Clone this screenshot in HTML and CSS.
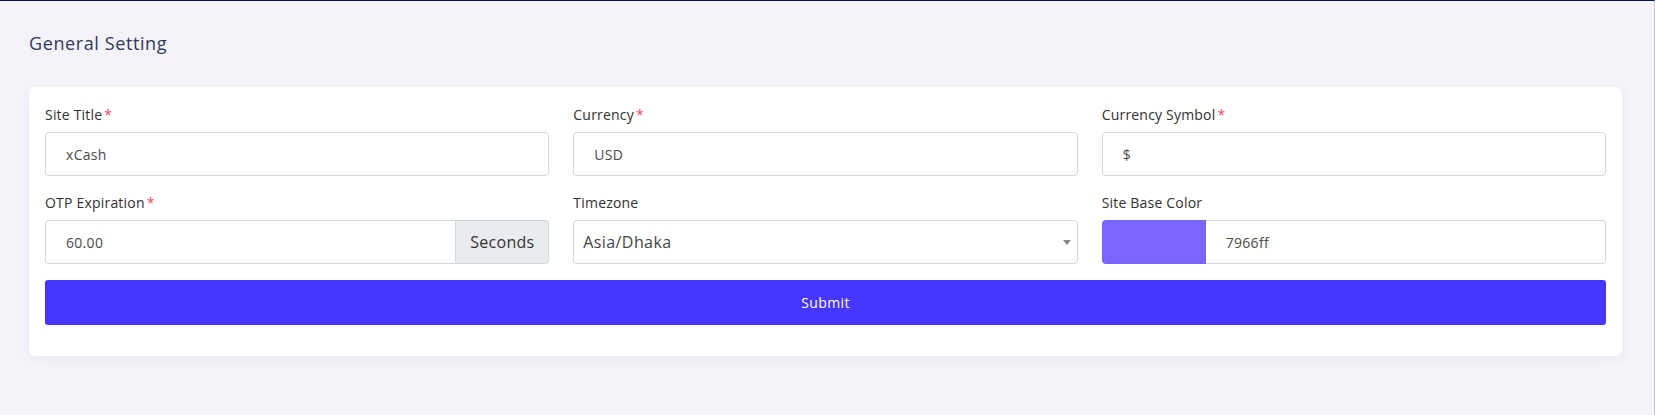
FILE: index.html
```html
<!DOCTYPE html>
<html lang="en">
<head>
<meta charset="utf-8">
<title>General Setting</title>
<link rel="stylesheet" href="styles.css">
</head>
<body>
<div class="page">
  <h4 class="page-title">General Setting</h4>
  <div class="card">
    <form class="form-grid">
      <div class="field">
        <label class="label">Site Title<span class="req">*</span></label>
        <div class="control"><span class="value">xCash</span></div>
      </div>
      <div class="field">
        <label class="label">Currency<span class="req">*</span></label>
        <div class="control"><span class="value">USD</span></div>
      </div>
      <div class="field">
        <label class="label">Currency Symbol<span class="req">*</span></label>
        <div class="control"><span class="value">$</span></div>
      </div>
      <div class="field">
        <label class="label">OTP Expiration<span class="req">*</span></label>
        <div class="input-group">
          <div class="control grow"><span class="value">60.00</span></div>
          <div class="addon">Seconds</div>
        </div>
      </div>
      <div class="field">
        <label class="label">Timezone</label>
        <div class="control select">
          <span class="select-value">Asia/Dhaka</span>
          <span class="caret"></span>
        </div>
      </div>
      <div class="field">
        <label class="label">Site Base Color</label>
        <div class="color-group">
          <div class="swatch"></div>
          <div class="control grow color-text"><span class="value">7966ff</span></div>
        </div>
      </div>
      <button type="button" class="btn-submit">Submit</button>
    </form>
  </div>
</div>
</body>
</html>
```

FILE: styles.css
```css
* {
  box-sizing: border-box;
}

html, body {
  margin: 0;
  padding: 0;
}

body {
  background: #f3f3f9;
  font-family: "Open Sans", "Noto Sans", sans-serif;
  color: #333;
}

.page {
  min-height: 415px;
  border-top: 1px solid #0c1152;
  border-right: 1px solid #c4c4c8;
  padding: 29px 32px 0 29px;
}

.page-title {
  margin: 0 0 30px 0;
  font-size: 18px;
  line-height: 27px;
  font-weight: 500;
  letter-spacing: 0.6px;
  color: #2e3a59;
}

.card {
  background: #fff;
  border-radius: 6px;
  box-shadow: 0 3px 12px rgba(60, 60, 110, 0.06);
  padding: 17px 16px 31px 16px;
}

.form-grid {
  display: grid;
  grid-template-columns: repeat(3, 1fr);
  column-gap: 24px;
  row-gap: 16px;
  margin: 0;
}

.field {
  display: flex;
  flex-direction: column;
}

.label {
  font-size: 14px;
  line-height: 21px;
  margin-bottom: 7px;
  color: #313131;
  letter-spacing: 0.2px;
}

.req {
  color: #ef4d5b;
  margin-left: 2px;
}

.control {
  height: 44px;
  border: 1px solid #d3d7de;
  border-radius: 4px;
  background: #fff;
  display: flex;
  align-items: center;
  padding-left: 20px;
  font-size: 14px;
  color: #4a4a4a;
}

.value {
  letter-spacing: 0.3px;
}

.input-group {
  display: flex;
  height: 44px;
}

.grow {
  flex: 1;
}

.input-group .control {
  border-top-right-radius: 0;
  border-bottom-right-radius: 0;
}

.addon {
  width: 93px;
  display: flex;
  align-items: center;
  justify-content: center;
  background: #e9ecef;
  border: 1px solid #d3d7de;
  border-left: none;
  border-radius: 0 4px 4px 0;
  font-size: 16px;
  color: #333;
  letter-spacing: 0.3px;
}

.select {
  padding-left: 9px;
  padding-right: 6px;
  justify-content: space-between;
}

.select-value {
  font-size: 16px;
  color: #444;
  letter-spacing: 0.4px;
}

.caret {
  width: 0;
  height: 0;
  border-left: 4px solid transparent;
  border-right: 4px solid transparent;
  border-top: 5px solid #888;
}

.color-group {
  display: flex;
  height: 44px;
}

.swatch {
  width: 104px;
  background: #7966ff;
  border-radius: 4px 0 0 4px;
}

.color-text {
  border-left: none;
  border-top-left-radius: 0;
  border-bottom-left-radius: 0;
}

.btn-submit {
  grid-column: 1 / -1;
  height: 45px;
  border: none;
  border-radius: 3px;
  background: #4636ff;
  color: #fff;
  font-family: "Open Sans", "Noto Sans", sans-serif;
  font-size: 14px;
  font-weight: 500;
  letter-spacing: 0.4px;
  cursor: pointer;
}
```
